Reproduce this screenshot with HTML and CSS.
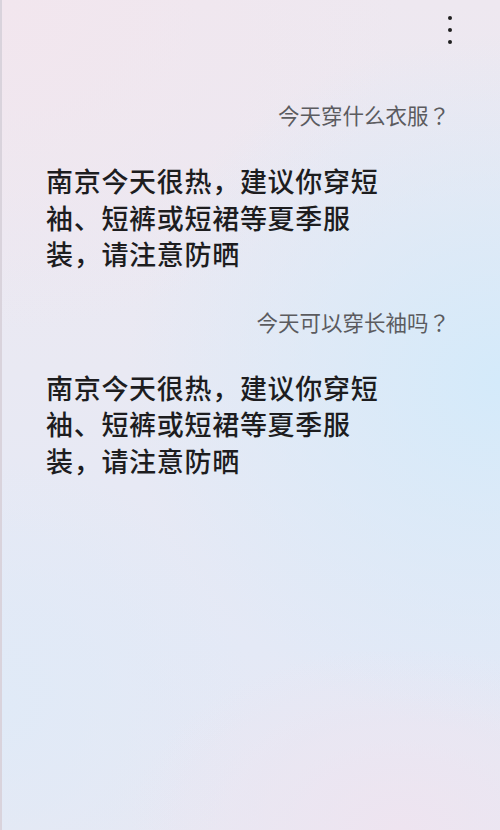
FILE: index.html
```html
<!DOCTYPE html>
<html lang="zh-CN">
<head>
	<meta charset="UTF-8">
	<title>今天穿什么</title>
	<link rel="stylesheet" href="styles.css">
</head>
<body>
<div class="screen">
	<header class="topbar">
		<button class="more" title="更多">
			<span class="dot"></span>
			<span class="dot"></span>
			<span class="dot"></span>
		</button>
	</header>
	<main class="chat">
		<p class="ask">今天穿什么衣服？</p>
		<p class="reply">南京今天很热，建议你穿短袖、短裤或短裙等夏季服装，请注意防晒</p>
		<p class="ask">今天可以穿长袖吗？</p>
		<p class="reply">南京今天很热，建议你穿短袖、短裤或短裙等夏季服装，请注意防晒</p>
	</main>
</div>
</body>
</html>
```

FILE: styles.css
```css
html, body {
	margin: 0;
	padding: 0;
}
body {
	font-family: "Noto Sans CJK SC", "Noto Sans", sans-serif;
}
.screen {
	width: 500px;
	height: 830px;
	box-sizing: border-box;
	border-left: 2px solid #d9d3dc;
	overflow: hidden;
	background:
		/* blue glow on the right */
		radial-gradient(ellipse 75% 42% at 100% 46%, rgba(212, 234, 250, 1), rgba(212, 234, 250, 0)),
		/* pink at the top left */
		radial-gradient(ellipse 80% 40% at 0 0, rgba(242, 230, 238, 1), rgba(242, 230, 238, 0)),
		/* pink at the bottom right */
		radial-gradient(ellipse 55% 22% at 80% 100%, rgba(238, 228, 240, 1), rgba(238, 228, 240, 0)),
		/* blue at the bottom left */
		radial-gradient(ellipse 50% 30% at 0 85%, rgba(224, 234, 247, 1), rgba(224, 234, 247, 0)),
		linear-gradient(180deg, #eee8f0 0%, #e9e9f3 45%, #e4e9f6 78%, #e7e8f3 100%);
}
.topbar {
	height: 100px;
	box-sizing: border-box;
	display: flex;
	justify-content: flex-end;
	padding: 16px 46px 0 0;
}
.more {
	display: flex;
	flex-direction: column;
	align-items: center;
	gap: 8px;
	width: 8px;
	height: 30px;
	padding: 0;
	border: none;
	background: none;
}
.dot {
	display: block;
	width: 4px;
	height: 4px;
	border-radius: 50%;
	background-color: #1f1f1f;
}
.chat {
	padding: 0 50px 0 44px;
}
.ask {
	margin: 0;
	text-align: right;
	/* TC face without locl keeps the full-width question mark centred */
	font-family: "Noto Sans CJK TC", "Noto Sans CJK SC", sans-serif;
	font-feature-settings: "locl" 0;
	font-size: 21.5px;
	line-height: 30px;
	color: #5b5b5f;
}
.reply {
	margin: 33px 0 34px;
	max-width: 345px;
	font-size: 27px;
	letter-spacing: 0.7px;
	line-height: 36.6px;
	font-weight: 500;
	color: #1d1d1f;
}
```
